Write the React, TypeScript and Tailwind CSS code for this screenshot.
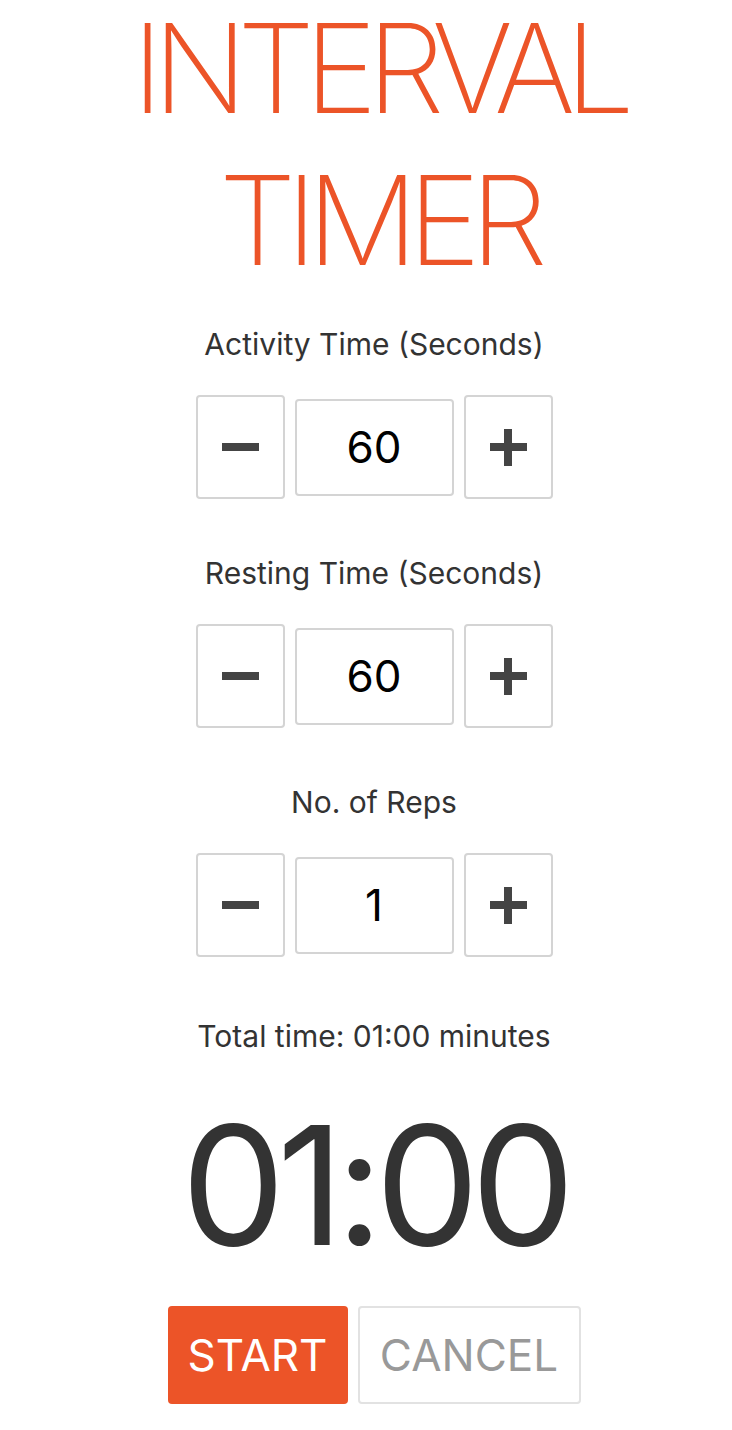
import React, { useState } from "react";

const font = { fontFamily: "Inter, 'Noto Sans', sans-serif" };

function Stepper({
  label,
  value,
  onDec,
  onInc,
}: {
  label: string;
  value: number;
  onDec: () => void;
  onInc: () => void;
}) {
  return (
    <div className="flex flex-col items-center">
      <div className="text-[30px] leading-[40px] text-[#333]">{label}</div>
      <div className="mt-[31px] flex items-center gap-[10px]">
        <button
          onClick={onDec}
          className="w-[89px] h-[104px] flex items-center justify-center border-2 border-[#d4d4d4] rounded-[4px] bg-white"
        >
          <span className="block w-[37px] h-[8px] bg-[#444]" />
        </button>
        <div className="w-[159px] h-[97px] flex items-center justify-center border-2 border-[#d4d4d4] rounded-[4px] text-[44px] text-black">
          {value}
        </div>
        <button
          onClick={onInc}
          className="w-[89px] h-[104px] flex items-center justify-center border-2 border-[#d4d4d4] rounded-[4px] bg-white"
        >
          <span className="relative block w-[37px] h-[37px]">
            <span className="absolute left-0 top-[14.5px] w-[37px] h-[8px] bg-[#444]" />
            <span className="absolute top-0 left-[14.5px] h-[37px] w-[8px] bg-[#444]" />
          </span>
        </button>
      </div>
    </div>
  );
}

const fmt = (s: number) =>
  `${String(Math.floor(s / 60)).padStart(2, "0")}:${String(s % 60).padStart(2, "0")}`;

export default function App() {
  const [activity, setActivity] = useState(60);
  const [rest, setRest] = useState(60);
  const [reps, setReps] = useState(1);
  const total = activity * reps;

  return (
    <main className="min-h-screen bg-white flex flex-col items-center pl-4" style={font}>
      <h1 className="pl-2 text-center text-[124px] font-extralight tracking-[-0.085em] text-[#ec5428]">
        <div className="leading-[136px]">INTERVAL</div>
        <div className="leading-[168px]">TIMER</div>
      </h1>
      <div className="mt-[20px]">
        <Stepper
          label="Activity Time (Seconds)"
          value={activity}
          onDec={() => setActivity((v) => Math.max(0, v - 5))}
          onInc={() => setActivity((v) => v + 5)}
        />
      </div>
      <div className="mt-[54px]">
        <Stepper
          label="Resting Time (Seconds)"
          value={rest}
          onDec={() => setRest((v) => Math.max(0, v - 5))}
          onInc={() => setRest((v) => v + 5)}
        />
      </div>
      <div className="mt-[54px]">
        <Stepper
          label="No. of Reps"
          value={reps}
          onDec={() => setReps((v) => Math.max(1, v - 1))}
          onInc={() => setReps((v) => v + 1)}
        />
      </div>
      <div className="mt-[59px] text-[30px] leading-[40px] text-[#333]">
        Total time: {fmt(total)} minutes
      </div>
      <div className="mt-[47px] text-[165px] leading-none tracking-[-0.05em] text-[#333]">
        {fmt(total)}
      </div>
      <div className="mt-[38px] flex items-center gap-[10px]">
        <button className="w-[180px] h-[98px] rounded-[4px] bg-[#ec5428] text-white text-[44px]">
          START
        </button>
        <button className="w-[223px] h-[98px] rounded-[4px] border-2 border-[#e2e2e2] bg-white text-[#999] text-[44px]">
          CANCEL
        </button>
      </div>
    </main>
  );
}
